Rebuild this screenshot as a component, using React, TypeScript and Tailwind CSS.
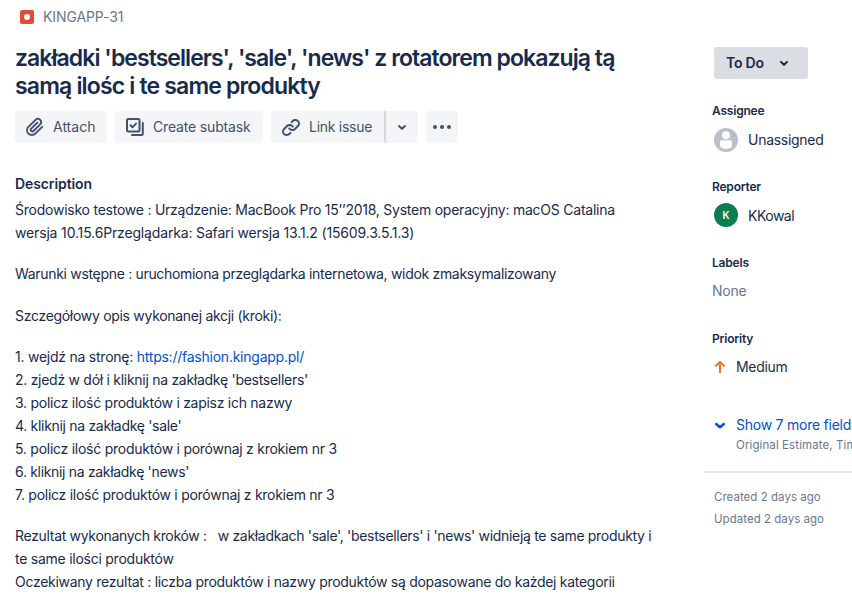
import React from "react";

type Line = { text: string; tracking: string; href?: string };

const paragraphs: Line[][] = [
  [
    { text: "Środowisko testowe : Urządzenie: MacBook Pro 15’’2018, System operacyjny: macOS Catalina", tracking: "tracking-[-0.24px]" },
    { text: "wersja 10.15.6Przeglądarka: Safari wersja 13.1.2 (15609.3.5.1.3)", tracking: "tracking-[-0.16px]" },
  ],
  [{ text: "Warunki wstępne : uruchomiona przeglądarka internetowa, widok zmaksymalizowany", tracking: "tracking-[-0.315px]" }],
  [{ text: "Szczegółowy opis wykonanej akcji (kroki):", tracking: "tracking-[-0.3px]" }],
  [
    { text: "1. wejdź na stronę: ", href: "https://fashion.kingapp.pl/", tracking: "tracking-[-0.24px]" },
    { text: "2. zjedź w dół i kliknij na zakładkę 'bestsellers'", tracking: "tracking-[-0.28px]" },
    { text: "3. policz ilość produktów i zapisz ich nazwy", tracking: "tracking-[-0.275px]" },
    { text: "4. kliknij na zakładkę 'sale'", tracking: "tracking-[-0.31px]" },
    { text: "5. policz ilość produktów i porównaj z krokiem nr 3", tracking: "tracking-[-0.26px]" },
    { text: "6. kliknij na zakładkę 'news'", tracking: "tracking-[-0.32px]" },
    { text: "7. policz ilość produktów i porównaj z krokiem nr 3", tracking: "tracking-[-0.27px]" },
  ],
  [
    { text: "Rezultat wykonanych kroków :   w zakładkach 'sale', 'bestsellers' i 'news' widnieją te same produkty i", tracking: "tracking-[-0.315px]" },
    { text: "te same ilości produktów", tracking: "tracking-[-0.25px]" },
    { text: "Oczekiwany rezultat : liczba produktów i nazwy produktów są dopasowane do każdej kategorii", tracking: "tracking-[-0.29px]" },
  ],
];

function Chevron({ className = "" }: { className?: string }) {
  return (
    <svg width="10" height="7" viewBox="0 0 10 7" fill="none" stroke="currentColor" strokeWidth="2" strokeLinecap="round" strokeLinejoin="round" className={className}>
      <path d="M2 2l3 2.7L8 2" />
    </svg>
  );
}

function AttachIcon() {
  return (
    <svg width="24" height="24" viewBox="0 0 24 24" fill="currentColor" className="shrink-0">
      <path d="M11.643 17.965c-1.53 1.495-4.016 1.496-5.542.004a3.773 3.773 0 0 1 .002-5.412l7.147-6.985a2.316 2.316 0 0 1 3.233-.003c.893.873.895 2.282.004 3.153l-6.703 6.55a.653.653 0 0 1-.914-.008.62.62 0 0 1 0-.902l6.229-6.087a.941.941 0 0 0 0-1.353.995.995 0 0 0-1.384 0l-6.23 6.087a2.502 2.502 0 0 0 0 3.607 2.643 2.643 0 0 0 3.683.009l6.703-6.55a4.074 4.074 0 0 0-.003-5.859 4.306 4.306 0 0 0-6.002.003l-7.148 6.985a5.655 5.655 0 0 0-.001 8.118c2.29 2.237 6.015 2.238 8.308-.005l6.862-6.705a.941.941 0 0 0 0-1.353.995.995 0 0 0-1.384 0l-6.862 6.706z" />
    </svg>
  );
}

function SubtaskIcon() {
  return (
    <svg width="20" height="20" viewBox="0 0 20 20" fill="none" stroke="currentColor" strokeWidth="2" strokeLinecap="round" strokeLinejoin="round" className="shrink-0">
      <rect x="2" y="2" width="12.5" height="12.5" rx="1" />
      <path d="M5.5 8.2l2 2L11 6.6M7 18h9.8a1 1 0 0 0 1-1V6" />
    </svg>
  );
}

function LinkIcon() {
  return (
    <svg width="24" height="24" viewBox="0 0 24 24" fill="currentColor" className="shrink-0">
      <path d="M12.856 5.457l-.937.92a1.002 1.002 0 0 0 0 1.437 1.047 1.047 0 0 0 1.463 0l.984-.966c.967-.95 2.542-1.135 3.602-.288a2.54 2.54 0 0 1 .203 3.81l-2.903 2.852a2.646 2.646 0 0 1-3.696 0l-1.11-1.09L9 13.57l1.108 1.089c1.822 1.788 4.802 1.788 6.622 0l2.905-2.852a4.558 4.558 0 0 0-.357-6.82c-1.893-1.517-4.695-1.226-6.422.47" />
      <path d="M11.144 19.543l.937-.92a1.002 1.002 0 0 0 0-1.437 1.047 1.047 0 0 0-1.462 0l-.985.966c-.967.95-2.542 1.135-3.602.288a2.54 2.54 0 0 1-.203-3.81l2.903-2.852a2.646 2.646 0 0 1 3.696 0l1.11 1.09L15 11.43l-1.108-1.089c-1.822-1.788-4.802-1.788-6.622 0l-2.905 2.852a4.558 4.558 0 0 0 .357 6.82c1.893 1.517 4.695 1.226 6.422-.47" />
    </svg>
  );
}

function Toolbar() {
  return (
    <div className="mt-[11px] flex h-8 gap-2 text-[14px] text-[#42526e]">
      <button className="flex w-[92px] items-center gap-[6px] rounded-[3px] bg-[#f4f5f7] pl-2">
        <AttachIcon />
        <span className="pb-[2px]">Attach</span>
      </button>
      <button className="flex w-[148px] items-center gap-2 rounded-[3px] bg-[#f4f5f7] pl-[10px]">
        <SubtaskIcon />
        <span className="pb-[2px] tracking-[-0.16px] whitespace-nowrap">Create subtask</span>
      </button>
      <div className="flex w-[147px] rounded-[3px] bg-[#f4f5f7]">
        <button className="flex w-[113px] items-center gap-[6px] pl-2">
          <LinkIcon />
          <span className="pb-[2px] tracking-[-0.27px] whitespace-nowrap">Link issue</span>
        </button>
        <button className="flex flex-1 items-center justify-center border-l-2 border-[#d5d9e0]">
          <Chevron />
        </button>
      </div>
      <button className="flex w-8 items-center justify-center gap-[3px] rounded-[3px] bg-[#f4f5f7]">
        <i className="size-1 rounded-full bg-[#42526e]" />
        <i className="size-1 rounded-full bg-[#42526e]" />
        <i className="size-1 rounded-full bg-[#42526e]" />
      </button>
    </div>
  );
}

function Label({ children }: { children: React.ReactNode }) {
  return <h3 className="h-4 text-[12px] leading-4 font-semibold tracking-[-0.2px]">{children}</h3>;
}

function Sidebar() {
  return (
    <aside className="w-[148px] shrink-0 overflow-hidden pt-[47px] whitespace-nowrap">
      <button className="ml-[10px] flex h-8 w-[94px] items-center justify-between rounded-[3px] bg-[#dadde2] pr-[19px] pl-3 text-[14px] font-semibold tracking-[-0.2px]">
        <span className="pb-[2px]">To Do</span>
        <Chevron />
      </button>
      <div className="mt-6 pl-2">
        <Label>Assignee</Label>
        <div className="mt-[9px] flex h-6 items-center gap-[10px] pl-[2px] text-[14px]">
          <svg width="24" height="24" viewBox="0 0 24 24">
            <circle cx="12" cy="12" r="12" fill="#b9bfcb" />
            <circle cx="12" cy="7.2" r="4" fill="white" />
            <path d="M6 14.3a2 2 0 0 1 2-2h8a2 2 0 0 1 2 2v3.2c0 2-3 3.3-6 3.3s-6-1.3-6-3.3z" fill="white" />
          </svg>
          <span className="pb-[2px] tracking-[-0.28px]">Unassigned</span>
        </div>
      </div>
      <div className="mt-[27px] pl-2">
        <Label>Reporter</Label>
        <div className="mt-2 flex h-6 items-center gap-[10px] pl-[2px] text-[14px]">
          <span className="flex size-6 items-center justify-center rounded-full bg-[#0b7d50] text-[10px] font-semibold text-white">K</span>
          <span className="tracking-[-0.5px]">KKowal</span>
        </div>
      </div>
      <div className="mt-7 pl-2">
        <Label>Labels</Label>
        <p className="mt-[10px] h-5 text-[14px] leading-5 tracking-[-0.25px] text-[#6b778c]">None</p>
      </div>
      <div className="mt-[30px] pl-2">
        <Label>Priority</Label>
        <div className="mt-[10px] flex h-5 items-center gap-[10px] pl-[2px] text-[14px]">
          <svg width="12" height="14" viewBox="0 0 12 14" fill="none" stroke="#ed7324" strokeWidth="2" strokeLinecap="round" strokeLinejoin="round">
            <path d="M6 12.2V2M2 5.8L6 1.9l4 3.9" />
          </svg>
          <span className="pb-[2px] tracking-[-0.3px]">Medium</span>
        </div>
      </div>
      <div className="mt-[38px] flex pl-[10px]">
        <svg width="12" height="20" viewBox="0 0 12 20" fill="none" stroke="#0052cc" strokeWidth="2.5" strokeLinecap="round" strokeLinejoin="round" className="shrink-0">
          <path d="M2.2 9L6 12.3 9.8 9" />
        </svg>
        <div className="ml-[10px]">
          <p className="text-[14px] leading-5 tracking-[-0.24px] text-[#0052cc]">Show 7 more fields</p>
          <p className="text-[11.5px] leading-5 tracking-[0.1px] text-[#6b778c]">Original Estimate, Time tracking</p>
        </div>
      </div>
      <hr className="mt-4 border-t-2 border-[#e6e8ee]" />
      <div className="mt-[13px] pl-[10px] text-[11.5px] leading-[22px] tracking-[0.03px] text-[#6b778c]">
        <p>Created 2 days ago</p>
        <p>Updated 2 days ago</p>
      </div>
    </aside>
  );
}

export default function App() {
  return (
    <div className="flex h-[607px] w-[852px] justify-between overflow-hidden bg-white font-['Inter',sans-serif] text-[#172b4d]">
      <main className="w-[670px] pl-[15px]">
        <div className="flex h-[34px] items-center gap-[9px] pl-[5px] text-[14px] text-[#6b778c]">
          <span className="flex size-[14px] items-center justify-center rounded-[2px] bg-[#e5493a]">
            <i className="size-[6px] rounded-full bg-white" />
          </span>
          <span className="pb-[2px] tracking-[-0.1px]">KINGAPP-31</span>
        </div>
        <h1 className="mt-[10px] text-[23px] leading-7 font-semibold whitespace-nowrap">
          <span className="block tracking-[-0.94px]">zakładki 'bestsellers', 'sale', 'news' z rotatorem pokazują tą</span>
          <span className="block tracking-[-0.83px]">samą ilośc i te same produkty</span>
        </h1>
        <Toolbar />
        <h2 className="mt-[31px] h-5 text-[14px] leading-5 font-semibold tracking-[-0.1px]">Description</h2>
        <div className="mt-[4px] flex flex-col gap-[18.3px] text-[14px] leading-[23px] whitespace-pre">
          {paragraphs.map((lines, i) => (
            <div key={i}>
              {lines.map((line) => (
                <p key={line.text} className={line.tracking}>
                  {line.text}
                  {line.href && <a className="text-[#0052cc]">{line.href}</a>}
                </p>
              ))}
            </div>
          ))}
        </div>
      </main>
      <Sidebar />
    </div>
  );
}
